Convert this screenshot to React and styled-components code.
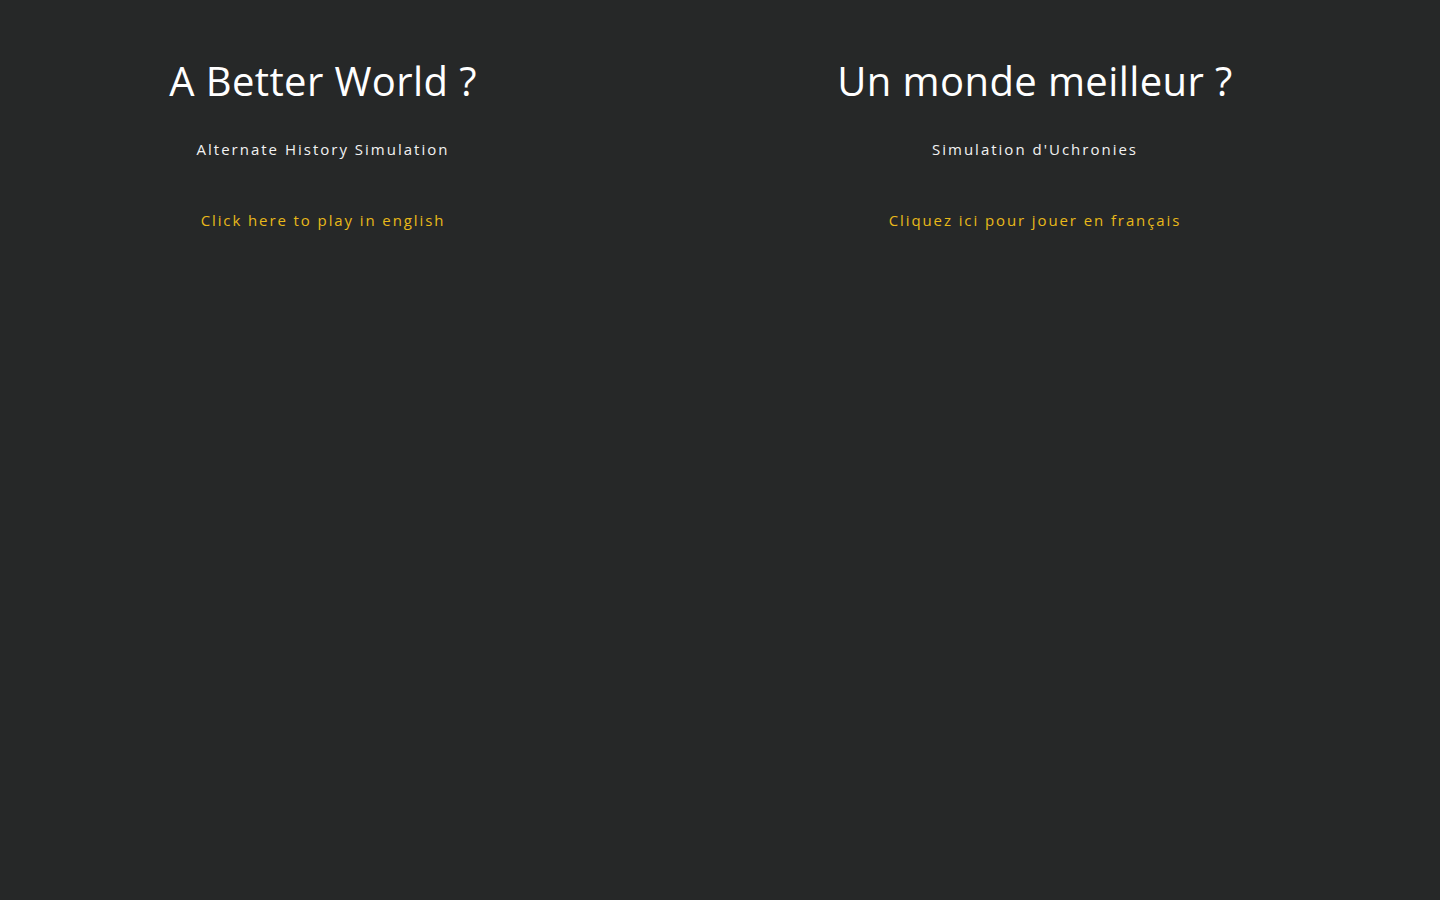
import styled, { createGlobalStyle } from "styled-components";

const Global = createGlobalStyle`
  html, body {
    margin: 0;
    padding: 0;
    background: #262828;
  }
  body {
    font-family: "Open Sans", "DejaVu Sans", sans-serif;
    min-height: 100vh;
  }
`;

const Page = styled.div`
  display: grid;
  grid-template-columns: 646px 778px;
  padding-top: 56px;
`;

const Column = styled.div`
  display: flex;
  flex-direction: column;
  align-items: center;
  text-align: center;
`;

const Title = styled.h1`
  margin: 0;
  font-size: 40px;
  line-height: 50px;
  font-weight: 400;
  letter-spacing: 0.4px;
  color: #ffffff;
`;

const Subtitle = styled.p`
  margin: 33px 0 0;
  font-size: 15px;
  line-height: 20px;
  letter-spacing: 2px;
  color: #f2f2f2;
`;

const PlayLink = styled.a`
  margin-top: 51px;
  font-size: 15px;
  line-height: 20px;
  letter-spacing: 1.9px;
  color: #e8b91a;
  text-decoration: none;
  cursor: pointer;
`;

const App = () => {
  return (
    <>
      <Global />
      <Page>
        <Column>
          <Title>A Better World ?</Title>
          <Subtitle>Alternate History Simulation</Subtitle>
          <PlayLink>Click here to play in english</PlayLink>
        </Column>
        <Column>
          <Title>Un monde meilleur ?</Title>
          <Subtitle>Simulation d'Uchronies</Subtitle>
          <PlayLink>Cliquez ici pour jouer en français</PlayLink>
        </Column>
      </Page>
    </>
  );
};

export default App;
